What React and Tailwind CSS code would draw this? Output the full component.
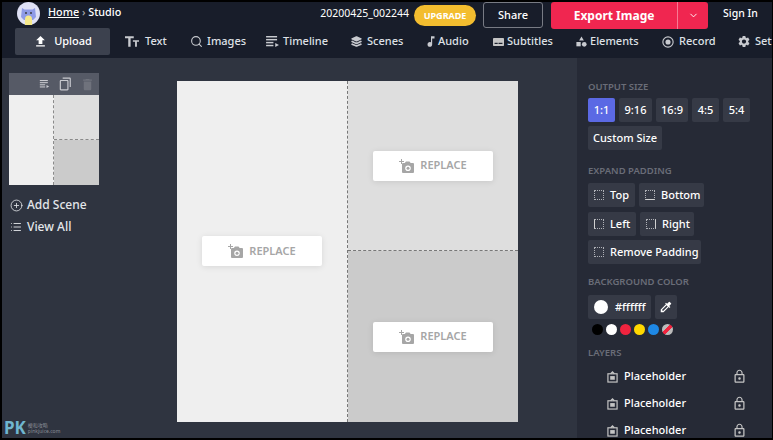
import { Search, ChevronDown, PlusCircle, List } from 'lucide-react'
import { MdFileUpload, MdSettings, MdMusicNote, MdColorize, MdContentCopy, MdDelete, MdLockOutline } from 'react-icons/md'
import { IoLayers } from 'react-icons/io5'

const font = { fontFamily: '"Noto Sans", "Open Sans", "Noto Sans CJK TC", sans-serif' }

function TimelineIcon({ className }) {
  return (
    <svg viewBox="0 0 14 12" className={className} fill="currentColor">
      <rect x="0" y="0" width="12" height="1.6" />
      <rect x="0" y="3.2" width="12" height="1.6" />
      <rect x="0" y="6.4" width="8" height="1.6" />
      <rect x="0" y="9.6" width="8" height="1.6" />
      <path d="M10 7.5l4 2.2-4 2.2z" />
    </svg>
  )
}

function TextIcon() {
  return (
    <svg viewBox="0 0 16 12" className="h-[11px] w-[14px]" fill="currentColor">
      <path d="M0 0h10v2.4H6.400V12H3.700V2.400H0z" />
      <path d="M9 4.500h7v1.800h-2.400V12h-2.100V6.300H9z" />
    </svg>
  )
}

function SubtitlesIcon() {
  return (
    <svg viewBox="0 0 14 12" className="h-[10px] w-[11px]">
      <rect x="0" y="1" width="14" height="10" rx="1" fill="#c4c4c4" />
      <rect x="2" y="7" width="4" height="1.500" fill="#181d2a" />
      <rect x="7" y="7" width="5" height="1.500" fill="#181d2a" />
    </svg>
  )
}

function ElementsIcon() {
  return (
    <svg viewBox="0 0 14 14" className="h-[12px] w-[11px]" fill="currentColor">
      <path d="M7 0l3 5H4z" />
      <rect x="0.500" y="7" width="5.500" height="5.500" />
      <circle cx="10.500" cy="10" r="3" />
    </svg>
  )
}

function RecordIcon() {
  return (
    <svg viewBox="0 0 14 14" className="h-[12px] w-[12px]" fill="none" stroke="currentColor">
      <circle cx="7" cy="7" r="6" strokeWidth="1.300" />
      <circle cx="7" cy="7" r="3" fill="currentColor" stroke="none" />
    </svg>
  )
}

function CameraPlusIcon() {
  return (
    <svg viewBox="0 0 15 14" className="h-[14px] w-[15px]" fill="currentColor">
      <path d="M2 0h1v2h2v1H3v2H2V3H0V2h2z" />
      <path fillRule="evenodd" d="M4 4h1.800L7 2.500h3.500L11.700 4H14a1 1 0 0 1 1 1v8a1 1 0 0 1-1 1H4a1 1 0 0 1-1-1V5a1 1 0 0 1 1-1zm5 2.500a2.800 2.800 0 1 0 0 5.600 2.800 2.800 0 0 0 0-5.600z" />
      <circle cx="9" cy="9.300" r="1.500" />
    </svg>
  )
}

function Logo() {
  return (
    <svg viewBox="0 0 23 23" className="ml-[15px] h-[23px] w-[23px] shrink-0">
      <circle cx="11.500" cy="11.500" r="11.500" fill="#dfe1f5" />
      <path d="M5 6l2.500 1.500h8L18 6l1 9-3 3H7l-3-3z" fill="#8f9be6" />
      <path d="M8 23v-6a3.500 3.500 0 0 1 7 0v6z" fill="#f5e88a" />
      <circle cx="9" cy="11" r="0.900" fill="#333" />
      <circle cx="14" cy="11" r="0.900" fill="#333" />
    </svg>
  )
}

function NavItem({ icon, label, width, gap = 'mr-[4px]' }) {
  return (
    <div className={`flex shrink-0 items-center whitespace-nowrap text-[11px] font-medium text-[#dfe1e6] ${width}`}>
      <span className={`flex w-[14px] justify-center text-[#c8cacf] ${gap}`}>{icon}</span>
      <span>{label}</span>
    </div>
  )
}

function Chip({ children, className = '' }) {
  return (
    <div className={`flex h-6 shrink-0 items-center whitespace-nowrap rounded-[2px] text-[11px] font-medium text-white ${className}`}>
      {children}
    </div>
  )
}

function DashBox({ edge = '' }) {
  return <span className={`mr-[6px] inline-block h-[10px] w-[10px] border border-dotted border-[#aeb0b6] ${edge}`} />
}

function SectionLabel({ children, className = '' }) {
  return <div className={`text-[9.500px] font-semibold leading-[12px] text-[#6a6d78] ${className}`}>{children}</div>
}

function ReplaceButton() {
  return (
    <div className="flex h-[30px] w-[120px] items-center justify-center gap-[6px] rounded-[2px] bg-white text-[11px] font-semibold text-[#a6a6a6] shadow-[0_1px_6px_rgba(0,0,0,0.1)]">
      <CameraPlusIcon />
      <span>REPLACE</span>
    </div>
  )
}

function LayerRow() {
  return (
    <div className="flex h-[27px] items-center pl-[19px] text-[11px] font-medium text-white">
      <svg viewBox="0 0 12 13" className="mr-[6px] h-[12px] w-[11px] text-[#c4c4c4]" fill="none" stroke="currentColor" strokeWidth="1.300">
        <rect x="1" y="3" width="10" height="9" />
        <rect x="3.500" y="5.500" width="5" height="4" fill="currentColor" stroke="none" />
        <path d="M4 3l2-2 2 2" />
      </svg>
      <span className="w-[108px]">Placeholder</span>
      <MdLockOutline className="h-[15px] w-[15px] text-[#c4c4c4]" />
    </div>
  )
}

export default function App() {
  const swatches = ['bg-black', 'bg-white', 'bg-[#f0243f]', 'bg-[#ffd800]', 'bg-[#1e88e5]']

  return (
    <div style={font} className="relative flex h-[440px] w-[773px] flex-col overflow-hidden border-t-2 border-r border-b-2 border-l-2 border-black bg-[#2f3440]">
      {/* Header */}
      <div className="h-[56px] shrink-0 overflow-hidden bg-[#181d2a]">
        <div className="flex h-[26px] items-start whitespace-nowrap">
          <Logo />
          <div className="ml-2 mt-[2px] text-[10.800px] font-medium leading-[16px] text-white">
            <span className="underline">Home</span>
            <span className="text-[#aaa]"> › </span>
            <span>Studio</span>
          </div>
          <div className="ml-[199px] mt-[3px] text-[10.500px] leading-[16px] text-white">20200425_002244</div>
          <div className="ml-[5px] mt-[3px] flex h-[21px] w-[62px] items-center justify-center rounded-full bg-[#f3bd2f] text-[9px] font-bold text-white">UPGRADE</div>
          <div className="ml-[7px] flex h-[26px] w-[60px] items-center justify-center rounded-[3px] border border-[#787b84] text-[11px] font-medium text-white">Share</div>
          <div className="ml-2 flex h-[27px] w-[157px] rounded-[3px] bg-[#f02650] text-white">
            <div className="flex w-[127px] items-center justify-center border-r border-[#f77a94] text-[12px] font-bold">Export Image</div>
            <div className="flex flex-1 items-center justify-center"><ChevronDown className="h-[11px] w-[11px]" /></div>
          </div>
          <div className="ml-[15px] mt-[3px] text-[10.500px] font-medium leading-[16px] text-white">Sign In</div>
        </div>
        <div className="flex items-center">
          <div className="ml-[13px] mr-[15px] flex h-[27px] w-[95px] shrink-0 items-center justify-center gap-[6px] rounded-[2px] bg-[#3c414e] text-[11px] font-medium text-white">
            <MdFileUpload className="h-[15px] w-[15px]" />
            <span>Upload</span>
          </div>
          <NavItem width="w-[64px]" gap="mr-[6px]" icon={<TextIcon />} label="Text" />
          <NavItem width="w-[76px]" icon={<Search className="h-[13px] w-[13px]" />} label="Images" />
          <NavItem width="w-[84px]" icon={<TimelineIcon className="h-[11px] w-[13px]" />} label="Timeline" />
          <NavItem width="w-[75px]" icon={<IoLayers className="h-[13px] w-[13px]" />} label="Scenes" />
          <NavItem width="w-[67px]" gap="mr-0" icon={<MdMusicNote className="h-[15px] w-[15px]" />} label="Audio" />
          <NavItem width="w-[83px]" gap="mr-[2px]" icon={<SubtitlesIcon />} label="Subtitles" />
          <NavItem width="w-[87px]" gap="mr-[2px]" icon={<ElementsIcon />} label="Elements" />
          <NavItem width="w-[76px]" icon={<RecordIcon />} label="Record" />
          <NavItem width="w-[60px]" icon={<MdSettings className="h-[15px] w-[15px]" />} label="Settings" />
        </div>
      </div>

      <div className="flex min-h-0 flex-1">
        {/* Scenes */}
        <div className="w-[175px] shrink-0 pl-[7px] pt-[15px]">
          <div className="w-[90px]">
            <div className="flex h-[22px] items-center justify-end gap-[8px] bg-[#565a66] pr-1 text-[#c9cacf]">
              <TimelineIcon className="h-[8px] w-[11px]" />
              <MdContentCopy className="h-[14px] w-[14px] -scale-x-100" />
              <MdDelete className="h-[15px] w-[15px] text-[#6f727c]" />
            </div>
            <div className="flex h-[90px]">
              <div className="w-[45px] border-r border-dashed border-[#8a8a8a] bg-[#efefef]" />
              <div className="flex flex-1 flex-col">
                <div className="h-[45px] border-b border-dashed border-[#8a8a8a] bg-[#dedede]" />
                <div className="flex-1 bg-[#cbcbcb]" />
              </div>
            </div>
          </div>
          <div className="mt-[12px] flex items-center gap-1 pl-[1px] text-[12px] font-medium leading-[16px] text-[#e4e6ea]">
            <PlusCircle className="h-[13px] w-[13px]" strokeWidth={1.500} />
            <span>Add Scene</span>
          </div>
          <div className="mt-[6px] flex items-center gap-[5px] pl-[1px] text-[12px] font-medium leading-[16px] text-[#e4e6ea]">
            <List className="h-[12px] w-[12px]" strokeWidth={1.800} />
            <span>View All</span>
          </div>
        </div>

        {/* Canvas */}
        <div className="w-[400px] shrink-0 pt-[23px]">
          <div className="flex h-[341px] w-[341px]">
            <div className="flex w-[171px] items-center justify-center border-r border-dashed border-[#777] bg-[#efefef] pb-[1px]">
              <ReplaceButton />
            </div>
            <div className="flex flex-1 flex-col">
              <div className="flex h-[170px] items-center justify-center border-b border-dashed border-[#777] bg-[#dedede]">
                <ReplaceButton />
              </div>
              <div className="flex flex-1 items-center justify-center bg-[#cbcbcb]">
                <ReplaceButton />
              </div>
            </div>
          </div>
        </div>

        {/* Settings */}
        <div className="flex-1 overflow-hidden bg-[#262a36] pl-[11px] pt-[23px]">
          <SectionLabel>OUTPUT SIZE</SectionLabel>
          <div className="mt-[5px] flex gap-1">
            <Chip className="w-[27px] justify-center bg-[#5b69e4]">1:1</Chip>
            <Chip className="w-[33px] justify-center bg-[#363a46]">9:16</Chip>
            <Chip className="w-[32px] justify-center bg-[#363a46]">16:9</Chip>
            <Chip className="w-[27px] justify-center bg-[#363a46]">4:5</Chip>
            <Chip className="w-[27px] justify-center bg-[#363a46]">5:4</Chip>
          </div>
          <Chip className="mt-1 w-[74px] justify-center bg-[#363a46]">Custom Size</Chip>
          <SectionLabel className="mt-[15px]">EXPAND PADDING</SectionLabel>
          <div className="mt-[6px] flex gap-1">
            <Chip className="w-[47px] bg-[#363a46] pl-[6px]"><DashBox />Top</Chip>
            <Chip className="w-[65px] bg-[#363a46] pl-[6px]"><DashBox edge="border-b-[#d0d0d0] [border-bottom-style:solid]" />Bottom</Chip>
          </div>
          <div className="mt-[5px] flex gap-1">
            <Chip className="w-[48px] bg-[#363a46] pl-[6px]"><DashBox edge="border-l-[#d0d0d0] [border-left-style:solid]" />Left</Chip>
            <Chip className="w-[54px] bg-[#363a46] pl-[6px]"><DashBox edge="border-r-[#d0d0d0] [border-right-style:solid]" />Right</Chip>
          </div>
          <Chip className="mt-[4px] w-[113px] bg-[#363a46] pl-[6px]"><DashBox />Remove Padding</Chip>
          <SectionLabel className="mt-[12px]">BACKGROUND COLOR</SectionLabel>
          <div className="mt-[7px] flex gap-1">
            <Chip className="w-[63px] bg-[#363a46] pl-[6px]">
              <span className="mr-[7px] h-[14px] w-[14px] rounded-full bg-white" />
              #ffffff
            </Chip>
            <Chip className="w-[22px] justify-center bg-[#363a46]"><MdColorize className="h-[14px] w-[14px]" /></Chip>
          </div>
          <div className="mt-[5px] flex gap-[3px] pl-[4px]">
            {swatches.map(c => <span key={c} className={`h-[11px] w-[11px] rounded-full ${c}`} />)}
            <span className="h-[11px] w-[11px] rounded-full bg-[linear-gradient(135deg,#bbb_40%,#f0243f_40%,#f0243f_60%,#bbb_60%)]" />
          </div>
          <SectionLabel className="mt-[12px]">LAYERS</SectionLabel>
          <div className="mt-[4px]">
            <LayerRow />
            <LayerRow />
            <LayerRow />
          </div>
        </div>
      </div>

      {/* Watermark */}
      <div className="pointer-events-none absolute bottom-[2px] left-[2px] flex items-center gap-[2px]">
        <span className="text-[17px] font-bold leading-none text-[#6fb6cf]">PK</span>
        <span className="text-[5px] leading-[6px] text-[#8a8d96]">梗和攻略<br />pinkjuice.com</span>
      </div>
    </div>
  )
}
